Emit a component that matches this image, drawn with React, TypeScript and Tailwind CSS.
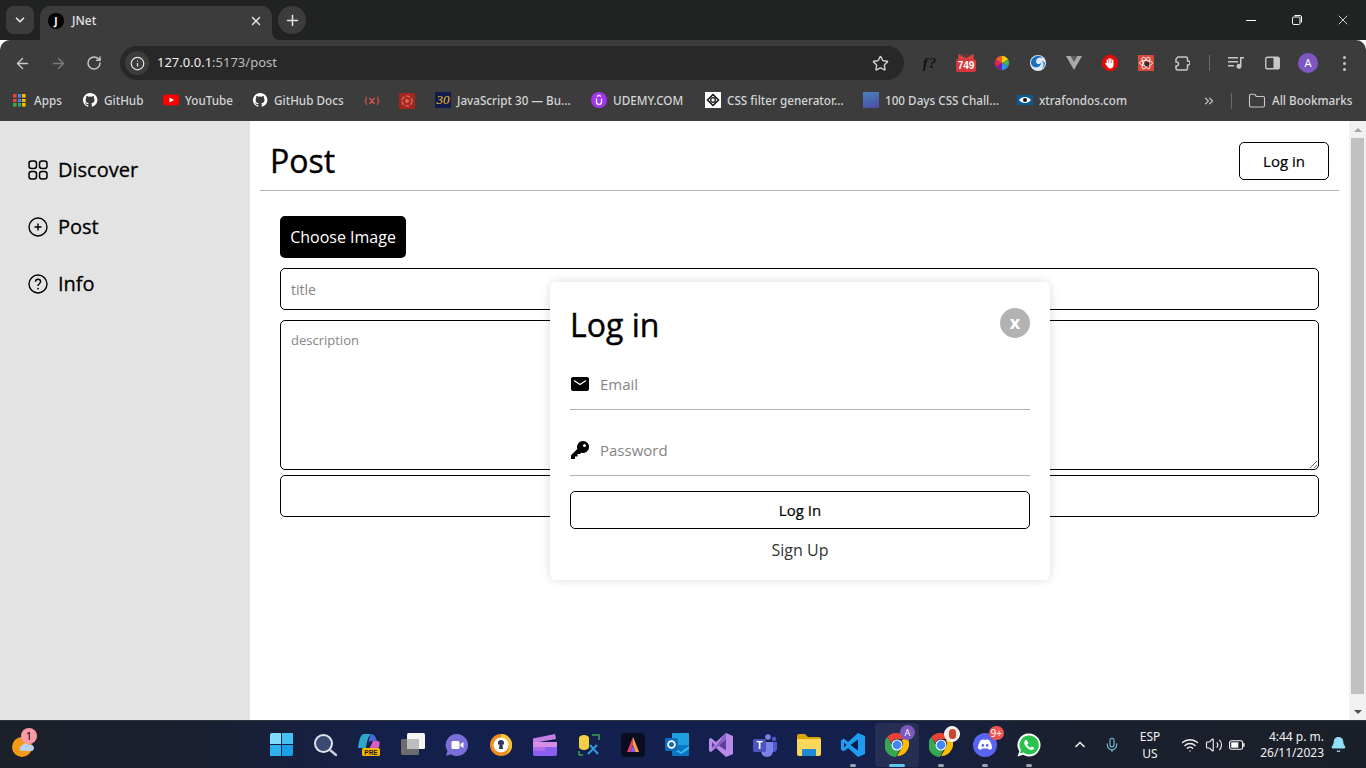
import { ReactNode } from "react";
import { ChevronDown, X, Plus, ArrowLeft, ArrowRight, RotateCw, Info, Star, ChevronsRight, Folder, ChevronUp, Mic, Wifi, Volume2, Bell } from "lucide-react";

const GH = "M12 1.5a10.5 10.5 0 0 0-3.3 20.5c.5.1.7-.2.7-.5v-1.9c-2.9.6-3.5-1.2-3.5-1.2-.5-1.2-1.2-1.5-1.2-1.5-1-.6.1-.6.1-.6 1 .1 1.6 1.1 1.6 1.1.9 1.6 2.5 1.1 3.1.9.1-.7.4-1.1.7-1.4-2.3-.3-4.8-1.2-4.8-5.2 0-1.1.4-2.1 1.1-2.8-.1-.3-.5-1.3.1-2.8 0 0 .9-.3 2.9 1.1a10 10 0 0 1 5.2 0c2-1.4 2.9-1.1 2.9-1.1.6 1.5.2 2.5.1 2.8.7.7 1.1 1.7 1.1 2.8 0 4-2.5 4.9-4.8 5.2.4.3.7 1 .7 1.9v2.8c0 .3.2.6.7.5A10.5 10.5 0 0 0 12 1.5z";

function GitHubIcon() {
  return (
    <svg viewBox="0 0 24 24" className="w-4 h-4 shrink-0" fill="#fff">
      <path d={GH} />
    </svg>
  );
}

function Bookmark({ w, icon, label }: { w: string; icon: ReactNode; label?: string }) {
  return (
    <div className={`flex items-center gap-[6px] shrink-0 ${w}`}>
      {icon}
      {label && <span className="whitespace-nowrap">{label}</span>}
    </div>
  );
}

function AppsIcon() {
  const cols = ["#ea4335", "#4285f4", "#fbbc04", "#ea4335", "#4285f4", "#fbbc04", "#34a853", "#34a853", "#fbbc04"];
  return (
    <div className="grid grid-cols-3 gap-[1px] w-[13px] h-[13px] shrink-0 mr-[2px]">
      {cols.map((c, i) => (
        <svg key={i} viewBox="0 0 3 3" className="w-[3.6px] h-[3.6px]">
          <rect width="3" height="3" fill={c} />
        </svg>
      ))}
    </div>
  );
}

function BookmarksBar() {
  return (
    <div className="h-[36px] pb-[5px] bg-[#3c3c3c] flex items-center pl-[13px] text-[11.7px] text-[#d3d5d6] font-['Noto_Sans',sans-serif] font-medium">
      <Bookmark w="w-[69px]" icon={<AppsIcon />} label="Apps" />
      <Bookmark w="w-[81px]" icon={<GitHubIcon />} label="GitHub" />
      <Bookmark
        w="w-[89px]"
        label="YouTube"
        icon={
          <svg viewBox="0 0 16 16" className="w-4 h-4 shrink-0">
            <rect y="2.5" width="16" height="11" rx="3" fill="#f00" />
            <path d="M6.5 5.5v5L11 8z" fill="#fff" />
          </svg>
        }
      />
      <Bookmark w="w-[112px]" icon={<GitHubIcon />} label="GitHub Docs" />
      <Bookmark
        w="w-[35px]"
        icon={
          <svg viewBox="0 0 16 16" className="w-4 h-4 shrink-0" fill="none" stroke="#d9534f" strokeWidth="1.2">
            <path d="M3 4C1.8 4 2.4 7.5 1 8c1.4.5.8 4 2 4M13 4c1.2 0 .6 3.500 2 4-1.400.5-.8 4-2 4M5.500 5l5 6M10.500 5l-5 6" />
          </svg>
        }
      />
      <Bookmark
        w="w-[36px]"
        icon={
          <svg viewBox="0 0 16 16" className="w-4 h-4 shrink-0">
            <rect width="16" height="16" fill="#a3271c" />
            <circle cx="8" cy="8" r="5" fill="none" stroke="#d9655a" strokeWidth="1.4" strokeDasharray="4 1.500" />
            <circle cx="8" cy="8" r="2" fill="#d9655a" />
          </svg>
        }
      />
      <Bookmark
        w="w-[156px]"
        label="JavaScript 30 — Bu..."
        icon={
          <div className="w-4 h-4 shrink-0 bg-[#131a4d] text-[#f0c419] font-['Liberation_Serif',serif] italic text-[13px] leading-4 text-center">
            30
          </div>
        }
      />
      <Bookmark
        w="w-[114px]"
        label="UDEMY.COM"
        icon={
          <svg viewBox="0 0 16 16" className="w-4 h-4 shrink-0">
            <circle cx="8" cy="8" r="8" fill="#a435f0" />
            <path d="M5.500 6.500v3.500a2.500 2.500 0 0 0 5 0V6.500M6 4.500l2-1.300 2 1.300" fill="none" stroke="#fff" strokeWidth="1.300" />
          </svg>
        }
      />
      <Bookmark
        w="w-[158px]"
        label="CSS filter generator..."
        icon={
          <svg viewBox="0 0 16 16" className="w-4 h-4 shrink-0">
            <rect width="16" height="16" fill="#fff" />
            <path d="M8 2.500 13.500 8 8 13.500 2.500 8z" fill="none" stroke="#111" strokeWidth="1.500" />
            <circle cx="8" cy="8" r="2.300" fill="none" stroke="#111" strokeWidth="1.300" />
          </svg>
        }
      />
      <Bookmark
        w="w-[154px]"
        label="100 Days CSS Chall..."
        icon={<div className="w-4 h-4 shrink-0 bg-[linear-gradient(160deg,#4a83bb,#4b49a8)]" />}
      />
      <Bookmark
        w="w-[186px]"
        label="xtrafondos.com"
        icon={
          <svg viewBox="0 0 16 10" className="w-4 h-[10px] shrink-0">
            <rect width="16" height="10" fill="#0a5a96" />
            <path d="M2 5c3-4 9-4 12 0-3 4-9 4-12 0z" fill="#fff" />
            <circle cx="8" cy="5" r="2" fill="#111" />
          </svg>
        }
      />
      <ChevronsRight size={14} strokeWidth={2} className="text-[#c8c8c8] shrink-0 -ml-[1px]" />
      <div className="w-[1px] h-[16px] bg-[#6a6a6a] ml-[15px] mr-[16px] shrink-0" />
      <Folder size={18} strokeWidth={1.5} className="text-[#c8c8c8] shrink-0" />
      <span className="ml-[6px] whitespace-nowrap">All Bookmarks</span>
    </div>
  );
}

function TabStrip() {
  return (
    <div className="h-[40px] bg-[#212322] flex items-end pl-[6px] relative">
      <div className="w-[28px] h-[28px] mb-[6px] rounded-[8px] bg-[#3c3c3c] flex items-center justify-center text-[#e3e3e3]">
        <ChevronDown size={14} strokeWidth={3} />
      </div>
      <div className="w-[232px] h-[34px] pb-[4px] ml-[6px] rounded-t-[10px] bg-[#3c3c3c] flex items-center pl-[8px] pr-[8px] relative">
        <div className="w-4 h-4 rounded-full bg-black text-white text-[10px] leading-4 text-center font-bold font-['Open_Sans',sans-serif] shrink-0">
          J
        </div>
        <span className="ml-[8px] text-[12px] font-medium text-[#e3e3e3] font-['Noto_Sans',sans-serif] flex-1">JNet</span>
        <X size={14} strokeWidth={2.5} className="text-[#e3e3e3] mr-[1px]" />
        <svg viewBox="0 0 8 8" className="absolute -right-[8px] bottom-0 w-2 h-2">
          <path d="M0 0v8h8A8 8 0 0 1 0 0z" fill="#3c3c3c" />
        </svg>
      </div>
      <div className="w-[28px] h-[28px] ml-[6px] mb-[6px] rounded-full bg-[#3c3c3c] flex items-center justify-center text-[#e3e3e3]">
        <Plus size={17} strokeWidth={2.2} />
      </div>
      <div className="flex-1" />
      <div className="flex h-full items-center text-white self-start">
        <div className="w-[46px] flex justify-center">
          <div className="w-[10px] h-[1px] bg-white" />
        </div>
        <div className="w-[46px] flex justify-center">
          <svg viewBox="0 0 10 10" className="w-[10px] h-[10px]" fill="none" stroke="#fff">
            <rect x=".5" y="2" width="7.500" height="7.500" rx="1.200" />
            <path d="M2.500 .5h5.500a1.500 1.500 0 0 1 1.500 1.500v5.500" />
          </svg>
        </div>
        <div className="w-[46px] flex justify-center">
          <X size={16} strokeWidth={1.2} />
        </div>
      </div>
    </div>
  );
}

function Ext({ children }: { children: ReactNode }) {
  return <div className="w-[36px] h-[24px] flex items-center justify-center shrink-0 relative">{children}</div>;
}

function Toolbar() {
  return (
    <div className="h-[45px] pt-[1px] bg-[#3c3c3c] rounded-t-[10px] flex items-center pl-[4px] text-[#c7c7c7]">
      <div className="w-[36px] flex justify-center">
        <ArrowLeft size={17} strokeWidth={2} />
      </div>
      <div className="w-[36px] flex justify-center text-[#7b7b7b]">
        <ArrowRight size={17} strokeWidth={2} />
      </div>
      <div className="w-[36px] flex justify-center">
        <RotateCw size={16} strokeWidth={2.2} />
      </div>
      <div className="ml-[8px] w-[784px] h-[34px] rounded-full bg-[#282828] flex items-center pl-[5px] pr-[15px] shrink-0">
        <div className="w-[24px] h-[24px] rounded-full bg-[#3c3c3c] flex items-center justify-center">
          <Info size={15} strokeWidth={2} className="text-[#e3e3e3]" />
        </div>
        <div className="ml-[8px] text-[13px] flex-1 font-['Noto_Sans',sans-serif] text-[#bdbdbd]">
          <span className="text-[#f1f1f1]">127.0.0.1</span>:5173/post
        </div>
        <Star size={17} strokeWidth={2} className="text-[#d0d0d0]" />
      </div>
      <div className="ml-[8px] flex items-center">
        <Ext>
          <span className="font-['Liberation_Serif',serif] italic text-[15px] text-[#111] font-bold tracking-[1px]">f?</span>
        </Ext>
        <Ext>
          <div className="flex flex-col items-center w-5">
            <svg viewBox="0 0 18 7" className="w-[16px] h-[6px] -mb-[1px]">
              <path d="M0 0h18v7H0z" fill="#d8433b" />
              <path d="M0 0l9 5 9-5" fill="#5a3d3b" />
            </svg>
            <div className="w-5 h-[13px] rounded-[2px] bg-[#d8363a] text-white text-[10px] leading-[13px] text-center font-bold font-['Liberation_Sans',sans-serif]">
              749
            </div>
          </div>
        </Ext>
        <Ext>
          <svg viewBox="0 0 16 16" className="w-4 h-4">
            <circle cx="8" cy="8" r="7" fill="none" stroke="#555" strokeWidth="1" />
            <path d="M8 8V1a7 7 0 0 1 6 3.500z" fill="#ffd400" />
            <path d="M8 8l6-3.500A7 7 0 0 1 14 11.500z" fill="#4caf50" />
            <path d="M8 8l6 3.500A7 7 0 0 1 8 15z" fill="#2196f3" />
            <path d="M8 8v7a7 7 0 0 1-6-3.500z" fill="#7b1fa2" />
            <path d="M8 8l-6 3.500A7 7 0 0 1 2 4.500z" fill="#e91e63" />
            <path d="M8 8 2 4.500A7 7 0 0 1 8 1z" fill="#ff5722" />
          </svg>
        </Ext>
        <Ext>
          <svg viewBox="0 0 16 16" className="w-4 h-4">
            <circle cx="8" cy="8" r="8" fill="#dfeaf5" />
            <path d="M1 8a7 7 0 0 1 12-5c-3-1.500-7 0-7 3.500 0 3 4 3.500 5 1 .5 4-4 6-7 4.500C2 11 1 9.500 1 8z" fill="#1f6fc0" />
            <path d="M15 8a7 7 0 0 1-4 6.300c2-1.300 3.500-5 1-7.800-.5-.6 2.500-.5 3 1.500z" fill="#3a8ad6" />
          </svg>
        </Ext>
        <Ext>
          <svg viewBox="0 0 16 14" className="w-4 h-[14px]">
            <path d="M0 0h16L8 14z" fill="#a9a9a9" />
            <path d="M4.500 0h7L8 6z" fill="#5c5c5c" />
          </svg>
        </Ext>
        <Ext>
          <svg viewBox="0 0 16 16" className="w-4 h-4">
            <path d="M4.700 0h6.600L16 4.700v6.600L11.300 16H4.700L0 11.300V4.700z" fill="#e00b0b" />
            <g fill="#fff">
              <rect x="4.600" y="4.500" width="1.400" height="6" rx=".7" />
              <rect x="6.400" y="3" width="1.400" height="7" rx=".7" />
              <rect x="8.200" y="3.300" width="1.400" height="7" rx=".7" />
              <rect x="10" y="4.500" width="1.400" height="6" rx=".7" />
              <path d="M4.600 8h6.800v2.500c0 1.800-1.300 3-3 3-1.400 0-2.100-.7-2.800-1.800L3.400 9c-.4-.8.600-1.500 1.200-.8z" />
            </g>
          </svg>
        </Ext>
        <Ext>
          <svg viewBox="0 0 16 16" className="w-4 h-4">
            <rect width="16" height="16" fill="#d8483c" />
            <g fill="none" stroke="#fff" strokeWidth=".8">
              <ellipse cx="8" cy="8" rx="6.500" ry="2.600" />
              <ellipse cx="8" cy="8" rx="6.500" ry="2.600" transform="rotate(60 8 8)" />
              <ellipse cx="8" cy="8" rx="6.500" ry="2.600" transform="rotate(120 8 8)" />
            </g>
            <circle cx="9" cy="9" r="2.500" fill="#3a2b2b" />
          </svg>
        </Ext>
        <Ext>
          <svg viewBox="0 0 16 16" className="w-4 h-4" fill="none" stroke="#c7c7c7" strokeWidth="1.500">
            <path d="M4 2h8a1.500 1.500 0 0 1 1.500 1.500V6h.5a2 2 0 0 1 0 4h-.5v3.500A1.500 1.500 0 0 1 12 15H3.500A1.500 1.500 0 0 1 2 13.500V11h.5a2 2 0 0 0 0-4H2V4z" />
          </svg>
        </Ext>
        <div className="w-[1px] h-[16px] bg-[#6a6a6a] ml-[9px] mr-[8px]" />
        <Ext>
          <svg viewBox="0 0 16 12" className="w-4 h-3" fill="#c7c7c7">
            <path d="M0 0h10v1.500H0zM0 4h10v1.500H0zM0 8h6v1.500H0zM12 0h4v1.500h-2.500V9.500A2.500 2.500 0 1 1 12 7z" />
          </svg>
        </Ext>
        <Ext>
          <svg viewBox="0 0 16 14" className="w-[15px] h-[14px]">
            <rect x=".8" y=".8" width="14.400" height="12.400" rx="2" fill="none" stroke="#c7c7c7" strokeWidth="1.500" />
            <path d="M9 1h5a1 1 0 0 1 1 1v10a1 1 0 0 1-1 1H9z" fill="#c7c7c7" />
          </svg>
        </Ext>
        <Ext>
          <div className="w-5 h-5 rounded-full bg-[#7e57c2] text-white text-[11px] leading-5 text-center font-['Noto_Sans',sans-serif]">A</div>
        </Ext>
        <Ext>
          <div className="flex flex-col gap-[3px]">
            <div className="w-[3px] h-[3px] rounded-full bg-[#c7c7c7]" />
            <div className="w-[3px] h-[3px] rounded-full bg-[#c7c7c7]" />
            <div className="w-[3px] h-[3px] rounded-full bg-[#c7c7c7]" />
          </div>
        </Ext>
      </div>
    </div>
  );
}

function NavItem({ icon, label }: { icon: ReactNode; label: string }) {
  return (
    <div className="flex items-center gap-[10px] h-[28px] text-[20px] font-medium text-black [-webkit-text-stroke:0.3px_#000]">
      {icon}
      <span>{label}</span>
    </div>
  );
}

function Sidebar() {
  return (
    <div className="w-[250px] shrink-0 bg-[#e3e3e3] pt-[35px] pl-[28px] flex flex-col gap-[29px]">
      <NavItem
        label="Discover"
        icon={
          <svg viewBox="0 0 20 20" className="w-5 h-5" fill="none" stroke="#000" strokeWidth="1.500">
            <rect x="1" y="1" width="7.500" height="7.500" rx="2.500" />
            <rect x="11.500" y="1" width="7.500" height="7.500" rx="2.500" />
            <rect x="1" y="11.500" width="7.500" height="7.500" rx="2.500" />
            <rect x="11.500" y="11.500" width="7.500" height="7.500" rx="2.500" />
          </svg>
        }
      />
      <NavItem
        label="Post"
        icon={
          <svg viewBox="0 0 20 20" className="w-5 h-5" fill="none" stroke="#000" strokeWidth="1.400">
            <circle cx="10" cy="10" r="9" />
            <path d="M10 6.500v7M6.500 10h7" />
          </svg>
        }
      />
      <NavItem
        label="Info"
        icon={
          <svg viewBox="0 0 20 20" className="w-5 h-5" fill="none" stroke="#000" strokeWidth="1.400">
            <circle cx="10" cy="10" r="9" />
            <path d="M7.500 7.800C7.500 6.300 8.600 5.300 10 5.300s2.600 1 2.600 2.300c0 2.100-2.600 2.300-2.600 4.400" />
            <circle cx="10" cy="14.600" r=".9" fill="#000" stroke="none" />
          </svg>
        }
      />
    </div>
  );
}

function LoginModal() {
  return (
    <div className="absolute left-[300px] top-[161px] w-[500px] h-[298px] bg-white rounded-[6px] shadow-[0_0_10px_rgba(0,0,0,0.15)] px-[20px] pt-[20px]">
      <div className="flex justify-between items-start h-[48px]">
        <h2 className="text-[32px] leading-[46px] font-medium text-black [-webkit-text-stroke:0.4px_#000]">Log in</h2>
        <div className="w-[30px] h-[30px] mt-[6px] rounded-full bg-[#b3b3b3] text-white font-bold text-[18px] leading-[28px] text-center">x</div>
      </div>
      <div className="flex items-center h-[50px] mt-[10px] border-b border-[#b0b0b0]">
        <svg viewBox="0 0 18 14" className="w-[18px] h-[14px] ml-[1px] mb-[2px] shrink-0">
          <rect width="18" height="14" rx="2" fill="#000" />
          <path d="M3 3.500 9 7.500l6-4" fill="none" stroke="#fff" strokeWidth="1.300" />
        </svg>
        <input placeholder="Email" className="ml-[11px] flex-1 text-[15px] outline-none placeholder:text-[#858585]" />
      </div>
      <div className="flex items-center h-[50px] mt-[16px] border-b border-[#b0b0b0]">
        <svg viewBox="0 0 18 18" className="w-[18px] h-[18px] ml-[1px] mb-[2px] shrink-0">
          <path d="M12 0a6 6 0 0 0-5.700 7.900L0 14.200V18h4v-2.500h2.500V13h2.300l1.400-1.300A6 6 0 1 0 12 0zm1.500 3a1.500 1.500 0 1 1 0 3 1.500 1.500 0 0 1 0-3z" fill="#000" />
        </svg>
        <input placeholder="Password" type="password" className="ml-[11px] flex-1 text-[15px] outline-none placeholder:text-[#858585]" />
      </div>
      <button className="mt-[15px] w-full h-[38px] rounded-[5px] border border-black bg-white text-[15px] font-medium text-black [-webkit-text-stroke:0.2px_#000]">Log In</button>
      <div className="mt-[9px] text-center text-[16px] text-[#333]">Sign Up</div>
    </div>
  );
}

function Main() {
  return (
    <div className="flex-1 relative bg-white px-[10px]">
      <div className="h-[70px] pt-[11px] border-b border-[#b3b3b3] flex items-center justify-between px-[10px]">
        <h1 className="text-[32px] font-medium text-black [-webkit-text-stroke:0.4px_#000]">Post</h1>
        <button className="w-[90px] h-[38px] rounded-[5px] border border-black bg-white text-[15px] font-medium text-black [-webkit-text-stroke:0.2px_#000]">Log in</button>
      </div>
      <div className="px-[20px] pt-[25px] flex flex-col items-start">
        <button className="w-[126px] h-[42px] rounded-[5px] bg-black text-white text-[16px]">Choose Image</button>
        <input placeholder="title" className="mt-[10px] w-full h-[42px] rounded-[5px] border border-black px-[10px] text-[14px] outline-none placeholder:text-[#858585]" />
        <textarea placeholder="description" className="mt-[10px] w-full h-[150px] rounded-[5px] border border-black px-[10px] py-[10px] text-[13px] outline-none placeholder:text-[#858585]" />
        <button className="mt-[5px] w-full h-[42px] rounded-[5px] border border-black bg-white" />
      </div>
      <LoginModal />
    </div>
  );
}

function Scrollbar() {
  return (
    <div className="w-[17px] shrink-0 bg-[#f1f1f1] flex flex-col items-center">
      <div className="h-[17px] flex items-center justify-center">
        <div className="w-0 h-0 border-x-[4px] border-x-transparent border-b-[4px] border-b-[#a3a3a3]" />
      </div>
      <div className="w-[13px] h-[556px] bg-[#c1c1c1]" />
      <div className="flex-1" />
      <div className="h-[17px] flex items-center justify-center">
        <div className="w-0 h-0 border-x-[4px] border-x-transparent border-t-[4px] border-t-[#505050]" />
      </div>
    </div>
  );
}

function TaskIcon({ children, dot, active }: { children: ReactNode; dot?: boolean; active?: boolean }) {
  return (
    <div className={`w-[44px] h-[44px] flex items-center justify-center relative shrink-0 rounded-[4px] ${active ? "bg-[#ffffff12]" : ""}`}>
      {children}
      {dot && <div className="absolute bottom-0 left-[19px] w-[6px] h-[3px] rounded-full bg-[#9ea3ad]" />}
      {active && <div className="absolute bottom-0 left-[14px] w-[16px] h-[3px] rounded-full bg-[#5fc8ee]" />}
    </div>
  );
}

function ChromeIcon() {
  return (
    <svg viewBox="0 0 24 24" className="w-[24px] h-[24px]">
      <path d="M12 0a12 12 0 0 1 10.400 6H12a6 6 0 0 0-5.700 4.200L2.300 4A12 12 0 0 1 12 0z" fill="#ea4335" />
      <path d="M22.400 6A12 12 0 0 1 12 24l5.200-9A6 6 0 0 0 16.500 8z" fill="#fbbc04" transform="translate(0 -1)" />
      <path d="M2.300 4l5.300 9a6 6 0 0 0 7 3.500L11 24A12 12 0 0 1 2.300 4z" fill="#34a853" />
      <circle cx="12" cy="12" r="5.500" fill="#fff" />
      <circle cx="12" cy="12" r="4.400" fill="#4285f4" />
    </svg>
  );
}

function Taskbar() {
  return (
    <div className="h-[48px] flex items-center border-t border-[#30343c] bg-[linear-gradient(90deg,#1b2029_0%,#1a2030_14%,#13204c_30%,#14204e_62%,#1a2030_76%,#1b1f27_100%)]">
      <div className="w-[259px] shrink-0 pl-[12px] flex items-center">
        <div className="relative w-[22px] h-[22px] mt-[2px]">
          <svg viewBox="0 0 22 22" className="w-[22px] h-[22px]">
            <circle cx="10" cy="12" r="10" fill="#f59a16" />
            <path d="M9 16a3 3 0 0 1 1-5.500 4 4 0 0 1 7-.5 3.200 3.200 0 0 1 3 6z" fill="#b9d4f2" />
          </svg>
          <div className="absolute -top-[7px] left-[9px] w-4 h-4 rounded-full bg-[#f99aa6] text-black text-[11px] leading-4 text-center font-['Noto_Sans',sans-serif]">1</div>
        </div>
      </div>
      <div className="w-[792px] flex items-center shrink-0">
        <TaskIcon>
          <div className="grid grid-cols-2 gap-[1px] w-[23px] h-[23px]">
            <div className="bg-[#7fdcfa] rounded-tl-[2px]" />
            <div className="bg-[#43bff2]" />
            <div className="bg-[#2fb0ef]" />
            <div className="bg-[#1b9fe8] rounded-br-[2px]" />
          </div>
        </TaskIcon>
        <TaskIcon>
          <svg viewBox="0 0 24 24" className="w-6 h-6" fill="none">
            <circle cx="10.500" cy="10.500" r="8.500" fill="#3b4a70" stroke="#dfe3ea" strokeWidth="2" />
            <path d="M17 17l6 5" stroke="#c9cdd6" strokeWidth="2.500" strokeLinecap="round" />
          </svg>
        </TaskIcon>
        <TaskIcon>
          <svg viewBox="0 0 24 24" className="w-6 h-6">
            <path d="M6 1h8c-3 3-4 7-5 14H1C2 8 3 3 6 1z" fill="#2da6c8" />
            <path d="M14 1c4 0 5 4 6 7h-6c-1 0-2 1-2.500 2.500C12 6 13 3 14 1z" fill="#4668d6" />
            <path d="M16 8h5c2 0 2 3 1 6-1 2-2 3-5 3h-6c2-2 3-5 5-9z" fill="#d45fc1" />
            <rect x="5" y="15" width="18" height="8" rx="1.500" fill="#f5b800" />
            <text x="14" y="21.500" textAnchor="middle" fontSize="6.500" fontWeight="700" fill="#1a1a1a" fontFamily="Liberation Sans">PRE</text>
          </svg>
        </TaskIcon>
        <TaskIcon>
          <svg viewBox="0 0 24 24" className="w-6 h-6">
            <rect y="6" width="18" height="16" rx="1.500" fill="#6c6c6c" />
            <rect x="6" y="0" width="18" height="16" rx="1.500" fill="#f5f5f5" />
            <rect x="6" y="6" width="12" height="10" fill="#bdbdbd" />
          </svg>
        </TaskIcon>
        <TaskIcon>
          <svg viewBox="0 0 24 24" className="w-6 h-6">
            <path d="M12 1a11 11 0 1 1-6 20.200L1 23l1.500-5A11 11 0 0 1 12 1z" fill="#7a6fd6" />
            <rect x="6.500" y="8" width="8" height="8" rx="1.500" fill="#fff" />
            <path d="M15.500 11l3-2v6l-3-2z" fill="#fff" />
          </svg>
        </TaskIcon>
        <TaskIcon>
          <svg viewBox="0 0 24 24" className="w-6 h-6">
            <circle cx="12" cy="12" r="11" fill="#f28c1e" />
            <path d="M12 1a11 11 0 0 1 11 11 11 11 0 0 1-6 10c3-3 4-8 2-11C17 8 15 6 12 6z" fill="#f7c536" />
            <circle cx="12" cy="12" r="7.500" fill="#fff" />
            <path d="M12 7a3 3 0 0 0-3 3v1.500h6V10a3 3 0 0 0-3-3zM10.500 11.500h3l.5 4.500h-4z" fill="#2c3a57" />
          </svg>
        </TaskIcon>
        <TaskIcon>
          <svg viewBox="0 0 24 24" className="w-6 h-6">
            <path d="M0 5.500 22 1l1 5L0 10z" fill="#c77fe8" />
            <rect y="9" width="24" height="14" rx="2" fill="#8a5ef0" />
            <rect y="9" width="24" height="5" fill="#d58ee8" />
            <rect y="14" width="12" height="4" fill="#b06fe6" />
          </svg>
        </TaskIcon>
        <TaskIcon>
          <svg viewBox="0 0 24 24" className="w-6 h-6" fill="none">
            <path d="M2 5c0-2 3-3 5-3s5 1 5 3v9c0 2-3 3-5 3s-5-1-5-3z" fill="#f3cf44" />
            <path d="M15 2h7v5M2 22v-4M2 22h4" stroke="#3ba24a" strokeWidth="1.500" />
            <path d="M11 21l9-9M13 12l8 9" stroke="#2e9be0" strokeWidth="2" />
          </svg>
        </TaskIcon>
        <TaskIcon>
          <svg viewBox="0 0 24 24" className="w-6 h-6">
            <rect width="24" height="24" rx="4" fill="#0a0d1f" />
            <path d="M12 4 6 19h3.500L12 12l2.500 7H18z" fill="#e83f6f" />
            <path d="M12 4l6 15h-3.500L12 12z" fill="#f4a534" />
            <path d="M9.500 19 12 12l2.500 7z" fill="#7c5bf0" />
          </svg>
        </TaskIcon>
        <TaskIcon>
          <svg viewBox="0 0 24 24" className="w-6 h-6">
            <rect x="7" y="0" width="17" height="14" rx="1" fill="#1ea0e0" />
            <path d="M7 12l17 0v10a1 1 0 0 1-1 1H8a1 1 0 0 1-1-1z" fill="#0d76c4" />
            <path d="M7 13l9 6 8-6v3l-8 5-9-5z" fill="#35b8ee" />
            <rect y="5" width="13" height="13" rx="1.500" fill="#0f6cbd" />
            <circle cx="6.500" cy="11.500" r="3.400" fill="none" stroke="#fff" strokeWidth="1.800" />
          </svg>
        </TaskIcon>
        <TaskIcon>
          <svg viewBox="0 0 24 24" className="w-6 h-6">
            <path d="M17 0l7 3v18l-7 3-10-9-5 4-2-1V6l2-1 5 4z" fill="#b88be8" />
            <path d="M17 6.500v11L9 12z" fill="#5f3f9e" />
            <path d="M3 9v6l3-3z" fill="#5f3f9e" />
            <path d="M17 0v6.500L7 15l-5 4 15-19z" fill="#8a5fc9" />
          </svg>
        </TaskIcon>
        <TaskIcon>
          <svg viewBox="0 0 24 24" className="w-6 h-6">
            <circle cx="15" cy="4" r="2.800" fill="#7b83eb" />
            <circle cx="21" cy="6" r="2.200" fill="#5059c9" />
            <path d="M18 9h6v7a3.500 3.500 0 0 1-6 2z" fill="#5059c9" />
            <path d="M8 9h12v9a6 6 0 0 1-12 0z" fill="#7b83eb" />
            <rect y="6" width="13" height="13" rx="1.500" fill="#4b53bc" />
            <text x="6.500" y="16" textAnchor="middle" fontSize="10" fontWeight="700" fill="#fff" fontFamily="Liberation Sans">T</text>
          </svg>
        </TaskIcon>
        <TaskIcon>
          <svg viewBox="0 0 24 22" className="w-6 h-[22px]">
            <path d="M0 2a2 2 0 0 1 2-2h6l3 3h11a2 2 0 0 1 2 2v3H0z" fill="#d9a300" />
            <path d="M0 5h24v15a2 2 0 0 1-2 2H2a2 2 0 0 1-2-2z" fill="#fbd75b" />
            <path d="M6 15h12a1 1 0 0 1 1 1v6H5v-6a1 1 0 0 1 1-1z" fill="#1f8ad6" />
          </svg>
        </TaskIcon>
        <TaskIcon dot>
          <svg viewBox="0 0 24 24" className="w-6 h-6">
            <path d="M17 0l7 3v18l-7 3L7 15l-4 3.200-3-1.500V7.300L3 5.800 7 9z" fill="#1f9cf0" />
            <path d="M17 6.500v11L9.500 12z" fill="#0b1d4a" />
            <path d="M3 9.500v5L5.500 12z" fill="#0b1d4a" />
          </svg>
        </TaskIcon>
        <TaskIcon active>
          <ChromeIcon />
          <div className="absolute top-[2px] right-[4px] w-[15px] h-[15px] rounded-full bg-[#7e57c2] text-white text-[9px] leading-[15px] text-center font-['Noto_Sans',sans-serif]">A</div>
        </TaskIcon>
        <TaskIcon dot>
          <ChromeIcon />
          <div className="absolute top-[3px] right-[3px] w-[16px] h-[16px] rounded-full bg-[#f4e9e4] border border-white flex items-center justify-center">
            <div className="w-[7px] h-[10px] rounded-full bg-[#c4472f]" />
          </div>
        </TaskIcon>
        <TaskIcon dot>
          <div className="w-6 h-6 rounded-full bg-[#5865f2] flex items-center justify-center">
            <svg viewBox="0 0 16 12" className="w-[14px] h-[11px]">
              <path d="M3 1c2-1 3-1 3.500-.5h3C10 0 11 0 13 1c2 3 3 6 3 9.500-1 1-2.500 1.500-3.500 1.500L11.500 10.500h-7L3.500 12C2.500 12 1 11.500 0 10.500 0 7 1 4 3 1z" fill="#fff" />
              <circle cx="5.500" cy="7" r="1.500" fill="#5865f2" />
              <circle cx="10.500" cy="7" r="1.500" fill="#5865f2" />
            </svg>
          </div>
          <div className="absolute top-[3px] right-[3px] h-[14px] px-[2px] rounded-full bg-[#ef5350] text-white text-[10px] leading-[14px] font-['Noto_Sans',sans-serif]">9+</div>
        </TaskIcon>
        <TaskIcon dot>
          <svg viewBox="0 0 24 24" className="w-6 h-6">
            <path d="M12 .5A11.500 11.500 0 0 0 2.300 18.200L.5 23.500l5.500-1.700A11.500 11.500 0 1 0 12 .5z" fill="#fff" />
            <path d="M12 2.500a9.500 9.500 0 0 0-8 14.600l-1 3.500 3.500-1.100A9.500 9.500 0 1 0 12 2.500z" fill="#29c24d" />
            <path d="M8.800 7c-.5 0-1.600 1-1.600 2.600 0 3 3.900 7.400 7.500 7.400 1.600 0 2.600-1.100 2.600-2.200l-2.600-1.400-1.200 1.200c-1.500-.6-2.700-1.800-3.300-3.200l1.200-1.200L9.800 7.100z" fill="#fff" />
          </svg>
        </TaskIcon>
      </div>
      <div className="flex-1 flex items-center text-[#f1f1f1] font-['Noto_Sans',sans-serif] text-[12px]">
        <div className="w-[16px] ml-[21px] flex justify-center">
          <ChevronUp size={17} strokeWidth={2.5} />
        </div>
        <div className="w-[16px] ml-[16px] flex justify-center text-[#7cc7dd]">
          <Mic size={20} strokeWidth={1.6} />
        </div>
        <div className="w-[36px] ml-[12px] text-center leading-[17px]">
          ESP
          <br />
          US
        </div>
        <div className="ml-[13px] flex items-center gap-[6px]">
          <Wifi size={18} strokeWidth={1.8} />
          <Volume2 size={18} strokeWidth={1.5} />
          <svg viewBox="0 0 18 11" className="w-[16px] h-[10px]" fill="none">
            <rect x=".7" y=".7" width="14.600" height="9.600" rx="2" stroke="#fff" strokeWidth="1.200" />
            <rect x="2.500" y="2.500" width="8" height="6" fill="#fff" />
            <rect x="16" y="3.500" width="1.500" height="4" fill="#fff" />
          </svg>
        </div>
        <div className="ml-[17px] w-[62px] text-right leading-[16px] whitespace-nowrap flex flex-col items-end">
          <span>4:44 p. m.</span>
          <span>26/11/2023</span>
        </div>
        <div className="ml-[6px] text-[#8fe0f8]">
          <Bell size={17} fill="#8fe0f8" strokeWidth={1.5} />
        </div>
      </div>
    </div>
  );
}

export default function App() {
  return (
    <div className="w-[1366px] h-[768px] overflow-hidden flex flex-col font-['Open_Sans',sans-serif]">
      <TabStrip />
      <Toolbar />
      <BookmarksBar />
      <div className="flex-1 flex min-h-0">
        <Sidebar />
        <Main />
        <Scrollbar />
      </div>
      <Taskbar />
    </div>
  );
}
